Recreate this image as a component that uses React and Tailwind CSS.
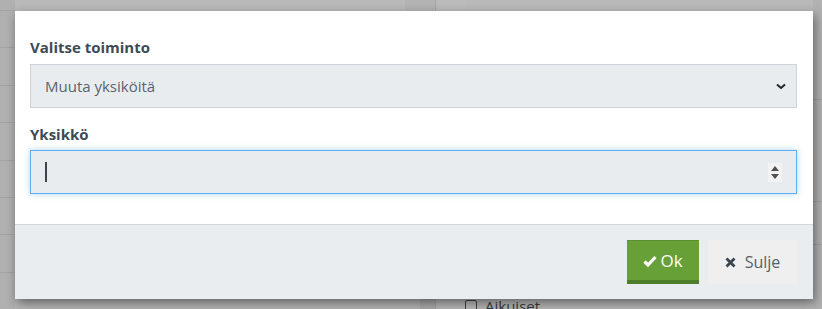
import React from "react";

function Chevron() {
  return (
    <svg width="10" height="7" viewBox="0 0 10 7" className="block">
      <path d="M1 1.5 L5 5 L9 1.5" fill="none" stroke="#1f2328" strokeWidth="2" />
    </svg>
  );
}

function Spinner() {
  return (
    <div className="flex h-[19px] w-[14px] flex-col items-center justify-center gap-[3px] bg-[#f3f3f3]">
      <svg width="8" height="5" viewBox="0 0 8 5" className="block">
        <path d="M0 5 L4 0 L8 5 Z" fill="#505050" />
      </svg>
      <svg width="8" height="5" viewBox="0 0 8 5" className="block">
        <path d="M0 0 L4 5 L8 0 Z" fill="#505050" />
      </svg>
    </div>
  );
}

function Check() {
  return (
    <svg width="14" height="12" viewBox="0 0 14 12" className="block">
      <path d="M1.5 6.5 L5 10 L12.5 2" fill="none" stroke="#ffffff" strokeWidth="3.2" strokeLinejoin="miter" />
    </svg>
  );
}

function Cross() {
  return (
    <svg width="11" height="11" viewBox="0 0 11 11" className="block">
      <path d="M1.5 1.5 L9.5 9.5 M9.5 1.5 L1.5 9.5" fill="none" stroke="#3a444e" strokeWidth="2.8" />
    </svg>
  );
}

export default function App() {
  const rows = [0, 1, 2, 3, 4, 5, 6, 7];
  return (
    <div
      className="relative h-[309px] w-[822px] overflow-hidden bg-[#b6b6b6]"
      style={{ fontFamily: '"Open Sans", "Noto Sans", sans-serif' }}
    >
      {/* dimmed page behind */}
      <div className="flex h-full w-full">
        <div className="flex w-[15px] flex-col bg-[#b0b0b0] pt-[10px]">
          {rows.map((r) => (
            <div key={r} className="h-[39px] border-t border-[#a3a3a3]" />
          ))}
        </div>
        <div className="flex flex-1 flex-col">
          <div className="flex h-[11px]">
            <div className="w-[390px] bg-[#b9b9b9]" />
            <div className="w-[30px] bg-[#b3b3b3]" />
            <div className="w-[31px] border-l border-[#a5a5a5] bg-[#bbbbbb]" />
            <div className="flex-1 bg-[#b9b9b9]" />
          </div>
          <div className="flex-1" />
          <div className="flex h-[12px]">
            <div className="w-[405px] bg-[#b5b5b5]" />
            <div className="w-[15px] bg-[#aaaaaa]" />
            <div className="flex flex-1 items-start border-l border-[#a3a3a3] bg-[#b6b6b6] pl-[29px] pt-[2px]">
              <div className="mt-[1px] h-[12px] w-[12px] rounded-[2px] border border-[#404040] bg-[#b8b8b8]" />
              <span className="ml-[8px] text-[15px] leading-[15px] text-[#3a3a3a]">Aikuiset</span>
            </div>
          </div>
        </div>
        <div className="flex w-[9px] flex-col bg-[#b2b2b2]">
          <div className="h-[100px] border-b border-[#a3a3a3]" />
          <div className="h-[102px] border-b border-[#a3a3a3]" />
          <div className="h-[43px] border-b border-[#a3a3a3]" />
        </div>
      </div>

      {/* modal */}
      <div className="absolute left-[15px] top-[11px] flex h-[288px] w-[798px] flex-col bg-white shadow-[2px_4px_10px_rgba(0,0,0,0.45)]">
        <div className="flex flex-1 flex-col pl-[15px] pr-[16px] pt-[26px]">
          <label className="text-[15px] font-bold leading-[21px] text-[#3d4b57]">Valitse toiminto</label>
          <div className="mt-[6px] flex h-[44px] items-center justify-between border border-[#ccd3da] bg-[#e9ecef] pl-[14px] pr-[10px]">
            <span className="text-[15px] text-[#59646e]">Muuta yksiköitä</span>
            <Chevron />
          </div>
          <label className="mt-[16px] text-[15px] font-bold leading-[21px] text-[#3d4b57]">Yksikkö</label>
          <div className="mt-[5px] flex h-[44px] items-center justify-between border border-[#5eaef0] bg-[#e9ecef] pl-[14px] pr-[14px] shadow-[0_0_6px_rgba(102,175,233,0.55)]">
            <div className="h-[20px] w-[1.5px] bg-[#3a4450]" />
            <Spinner />
          </div>
        </div>
        <div className="flex h-[75px] items-start justify-end gap-[9px] border-t border-[#d3d5d8] bg-[#eaedf0] pr-[16px] pt-[15px]">
          <button className="flex h-[44px] w-[72px] items-center justify-center gap-[3px] border-t border-[#5a8e30] border-b-[4px] border-b-[#4e7d29] bg-[#66a036] text-[17px] text-white">
            <Check />
            <span>Ok</span>
          </button>
          <button className="flex h-[44px] w-[89px] items-center justify-center gap-[9px] bg-[#efefef] text-[16px] text-[#56616b]">
            <Cross />
            <span>Sulje</span>
          </button>
        </div>
      </div>
    </div>
  );
}
